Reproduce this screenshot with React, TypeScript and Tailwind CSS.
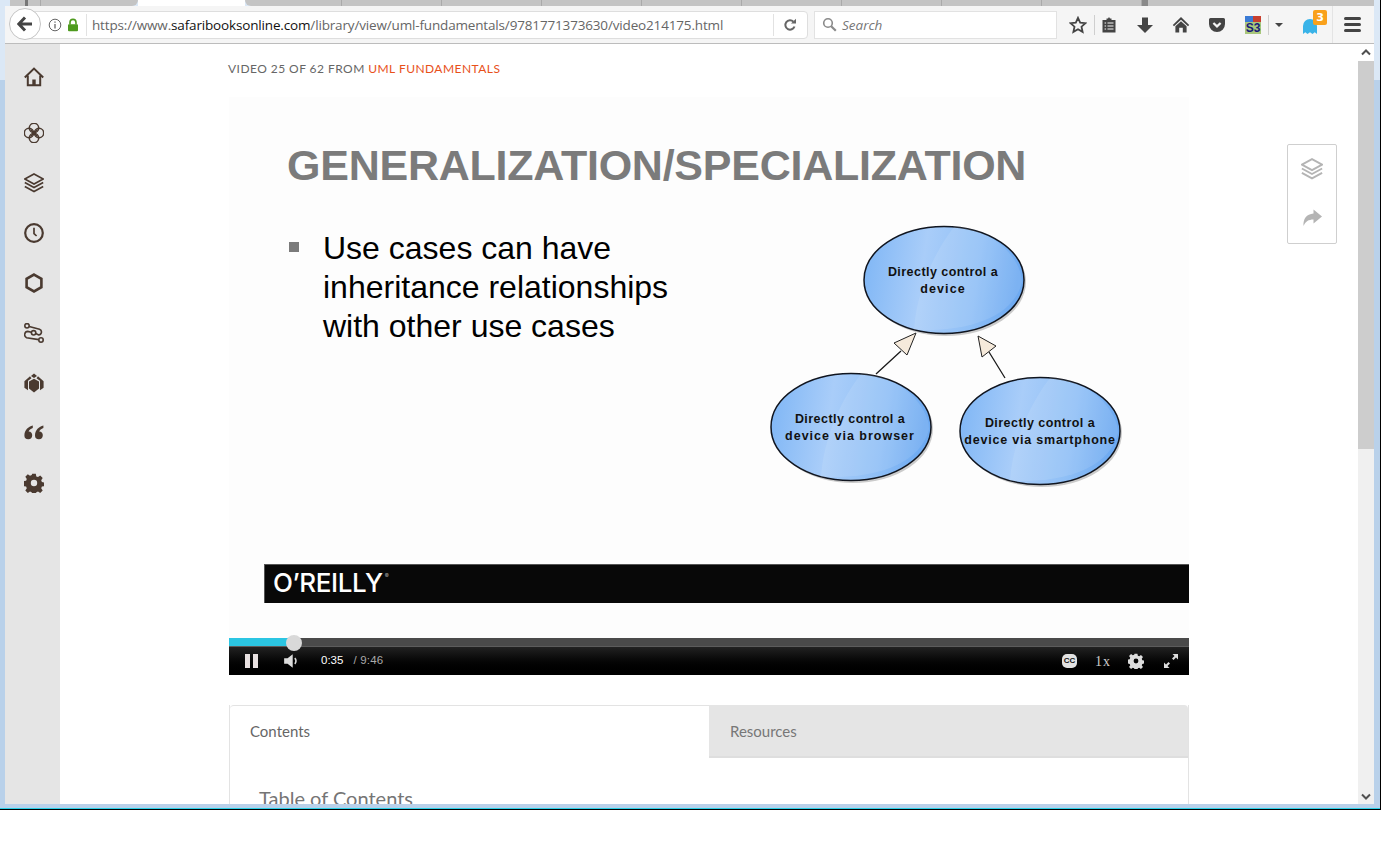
import React from 'react';

const brown = '#4a3a30';

const SIDE_ICONS: React.ReactNode[] = [
  <g fill="none" stroke={brown} strokeWidth="2" key="home">
    <path d="M.8 10.500 10 1.600l9.200 8.900" />
    <path d="M3.800 8.500V18.200h12.400V8.500" />
    <path d="M10 18v-5.500" strokeWidth="3.400" />
  </g>,
  <g fill="none" stroke={brown} strokeWidth="1.500" key="petals">
    <circle cx="10" cy="5" r="4.700" />
    <circle cx="10" cy="15" r="4.700" />
    <circle cx="5" cy="10" r="4.700" />
    <circle cx="15" cy="10" r="4.700" />
    <path d="M6.500 6.500l7 7M13.500 6.500l-7 7" />
  </g>,
  <g fill="none" stroke={brown} strokeWidth="1.600" key="layers">
    <path d="M10 1 19.200 6 10 11 .8 6z" />
    <path d="M.8 9.500 10 14.500l9.200-5" />
    <path d="M.8 13.500 10 18.500l9.200-5" />
  </g>,
  <g fill="none" stroke={brown} key="clock">
    <circle cx="10" cy="10" r="8.800" strokeWidth="2.200" />
    <path d="M10 4.800V10.600l2.600 2.400" strokeWidth="1.700" />
  </g>,
  <path d="M10 1.600 17.400 5.800v8.400L10 18.400 2.600 14.200V5.800z" fill="none" stroke={brown} strokeWidth="2.600" key="hex" />,
  <g fill="none" stroke={brown} strokeWidth="1.600" key="paths">
    <circle cx="3" cy="2.800" r="2.200" />
    <circle cx="9.600" cy="9.800" r="2.200" />
    <circle cx="17" cy="17" r="2.200" />
    <path d="M5.200 3.400 15.500 6.200a3 3 0 0 1 -.8 5.800L11.800 10.500M7.400 9.200 3.800 8.400a3.300 3.300 0 0 0 -1.200 6.300L14.800 16.600" />
  </g>,
  <g fill={brown} key="box">
    <path d="M10 .4 13 3 10 5 7 3z" />
    <path d="M10 5.800 15 8.600V15.600L10 19.400 5 15.600V8.600z" />
    <path d="M6 3.200 .4 8.200V14.800L4 17.200V7.700L7.500 5.300zM14 3.200 19.600 8.200V14.800L16 17.200V7.700L12.500 5.300z" />
  </g>,
  <g fill={brown} key="quote">
    <path d="M8.800 2.500C4.400 3.700 .4 7 .4 12.400a3.900 3.900 0 1 0 4.200-3.900c.5-1.500 2-2.800 4.200-3.600z" />
    <path d="M19.400 2.500c-4.400 1.200-8.400 4.500-8.400 9.900a3.900 3.900 0 1 0 4.200-3.900c.5-1.500 2-2.800 4.200-3.600z" />
  </g>,
  <path
    key="gear"
    fill={brown}
    fillRule="evenodd"
    d="M8.200.8h3.600l.5 2.600 1.700.7 2.200-1.500 2.500 2.500-1.500 2.200.7 1.700 2.600.5v3.600l-2.600.5-.7 1.700 1.500 2.200-2.500 2.500-2.200-1.500-1.700.7-.5 2.600H8.200l-.5-2.600-1.700-.7-2.200 1.500-2.500-2.500 1.500-2.200-.7-1.700-2.600-.5V8.200l2.600-.5.7-1.700-1.500-2.200 2.500-2.500 2.200 1.500 1.700-.7zM10 6.800a3.200 3.200 0 1 0 0 6.400 3.200 3.200 0 0 0 0-6.400z"
  />,
];

function Sidebar() {
  return (
    <div className="w-[55px] shrink-0 bg-[#e5e5e5] flex flex-col items-center gap-[30px] pt-[23px] pl-[3px]">
      {SIDE_ICONS.map((icon, i) => (
        <svg key={i} width="20" height="20" viewBox="0 0 20 20" className="first:mb-[6px]">
          {icon}
        </svg>
      ))}
    </div>
  );
}

function TabStrip() {
  return (
    <div className="h-[6px] shrink-0 flex">
      <div className="w-[10px]" />
      <div className="w-[15px] bg-[#c4c4c4]" />
      <div className="w-[3px] bg-[#777]" />
      <div className="w-[13px] bg-[#c4c4c4] border-r border-[#aaa]" />
      <div className="w-[97px] bg-[#c4c4c4] rounded-br-[8px]" />
      <div className="w-[107px] bg-white" />
      <div className="w-[97px] bg-[#c4c4c4] border-r border-[#aaa] rounded-bl-[8px]" />
      {[0, 1, 2, 3, 4, 5, 6, 7].map(i => (
        <div key={i} className="w-[100px] bg-[#c4c4c4] border-r border-[#aaa]" />
      ))}
      <div className="w-[6px] bg-[#8a8a8a]" />
      <div className="flex-1 bg-[#c4c4c4] mr-[6px]" />
    </div>
  );
}

function Toolbar() {
  return (
    <div className="h-[38px] shrink-0 bg-[#f5f5f5] border-b border-[#bcbcbc] flex items-center relative">
      {/* back button */}
      <div className="absolute left-[4px] top-[2px] w-[32px] h-[32px] rounded-full bg-white border border-[#c4c4c4] flex items-center justify-center z-10">
        <svg width="16" height="16" viewBox="0 0 16 16">
          <path d="M8 1.500 1.800 8 8 14.500M2.500 8H15" fill="none" stroke="#444" strokeWidth="3" />
        </svg>
      </div>
      <div className="ml-[20px] w-[783px] h-[28px] bg-white border border-[#dedede] rounded-r-sm flex items-center pl-[22px]">
        <svg width="14" height="14" viewBox="0 0 14 14" className="shrink-0">
          <circle cx="7" cy="7" r="5.800" fill="none" stroke="#666" strokeWidth="1" />
          <path d="M7 6v4.400M7 3.400v1.400" stroke="#666" strokeWidth="1.300" />
        </svg>
        <svg width="12" height="14" viewBox="0 0 12 14" className="ml-[5px] shrink-0">
          <path d="M3 6.500V4.400a3 3 0 0 1 6 0v2.100" fill="none" stroke="#4e9a1e" strokeWidth="1.600" />
          <rect x="1" y="6.200" width="10" height="7" rx="1" fill="#4e9a1e" />
        </svg>
        <div className="w-px h-[22px] bg-[#e2e2e2] ml-[7px]" />
        <div className="ml-[5px] mt-px text-[13.5px] text-[#666] font-['Open_Sans',sans-serif] whitespace-nowrap tracking-[-0.16px] w-[681px]">
          https://www.<span className="text-[#111]">safaribooksonline.com</span>/library/view/uml-fundamentals/9781771373630/video214175.html
        </div>
        <div className="w-px h-[22px] bg-[#e2e2e2]" />
        <svg width="14" height="14" viewBox="0 0 14 14" className="ml-[9px]">
          <path d="M11.500 8.500A4.700 4.700 0 1 1 10.400 3.600" fill="none" stroke="#666" strokeWidth="2" />
          <path d="M8 5.600h5V.8z" fill="#666" />
        </svg>
      </div>
      <div className="ml-[6px] w-[243px] h-[28px] bg-white border border-[#e2e2e2] flex items-center pl-[7px] gap-[5px]">
        <svg width="15" height="15" viewBox="0 0 15 15">
          <circle cx="6" cy="6" r="4.300" fill="none" stroke="#8a8a8a" strokeWidth="1.600" />
          <path d="M9.200 9.200l4.600 4.600" stroke="#8a8a8a" strokeWidth="2.200" />
        </svg>
        <span className="mt-px text-[13.5px] italic text-[#777] font-['Open_Sans',sans-serif]">Search</span>
      </div>
      <div className="flex items-center ml-[12px]">
        <svg width="18" height="18" viewBox="0 0 18 18">
          <path d="M9 1.800l2.200 4.800 5.200.6-3.900 3.500 1.100 5.200L9 13.200l-4.600 2.700 1.100-5.200L1.600 7.200l5.200-.6z" fill="none" stroke="#444" strokeWidth="1.800" />
        </svg>
        <div className="w-px h-[20px] bg-[#cfcfcf] ml-[7px]" />
        <svg width="16" height="18" viewBox="0 0 16 18" className="ml-[6px]">
          <path d="M1.500 4h13v12.500h-13zM5.500 4V2.500h1.500L8 1l1 1.500h1.500V4" fill="#444" />
          <path d="M3.600 7h1.500M6.500 7h6M3.600 10h1.500M6.500 10h6M3.600 13h1.500M6.500 13h6" stroke="#f5f5f5" strokeWidth="1.200" />
        </svg>
        <svg width="18" height="18" viewBox="0 0 18 18" className="ml-[19px]">
          <path d="M6 1.500h6v7.500h5L9 17 1 9h5z" fill="#444" />
        </svg>
        <svg width="18" height="18" viewBox="0 0 18 18" className="ml-[18px]">
          <path d="M9 1 .8 9l1.200 1.200L9 3.700l7 6.500L17.200 9z" fill="#444" />
          <path d="M9 5.200 3.400 10.200V16.600h3.800v-4.800h3.600v4.800h3.800V10.200z" fill="#444" />
        </svg>
        <svg width="18" height="18" viewBox="0 0 18 18" className="ml-[18px]">
          <path d="M2.500 2h13A1.500 1.500 0 0 1 17 3.500V8A8 8 0 0 1 1 8V3.500A1.500 1.500 0 0 1 2.500 2z" fill="#444" />
          <path d="M5.400 7 9 10.400 12.600 7" fill="none" stroke="#f5f5f5" strokeWidth="2.200" />
        </svg>
        <div className="ml-[19px] w-[16px] h-[18px] grid grid-cols-2 grid-rows-[6px_12px] overflow-hidden">
          <div className="bg-[#3a7bd5]" />
          <div className="bg-[#c8402f]" />
          <div className="col-span-2 bg-[#a9c77c] text-[#1a1a7a] text-[12px] leading-[12px] font-bold font-['Liberation_Sans',sans-serif] text-center">S3</div>
        </div>
        <div className="w-px h-[20px] bg-[#cfcfcf] ml-[7px]" />
        <div className="ml-[6px] w-0 h-0 border-x-[4px] border-x-transparent border-t-[4px] border-t-[#444]" />
        <div className="relative ml-[19px] w-[16px] h-[18px]">
          <svg width="16" height="18" viewBox="0 0 16 18" className="mt-[2px]">
            <path d="M1 16V8a7 7 0 0 1 14 0v8l-2.300-1.800L10.500 16 8 14.200 5.500 16l-2.200-1.800z" fill="#39b3e8" />
          </svg>
          <div className="absolute left-[11px] -top-[6px] w-[14px] h-[15px] rounded-[2px] bg-[#f9a11b] text-white text-[11px] leading-[15px] font-bold text-center font-['DejaVu_Sans',sans-serif]">3</div>
        </div>
        <div className="w-px h-[37px] bg-[#e4e4e4] ml-[14px]" />
        <div className="ml-[11px] w-[17px] flex flex-col gap-[3px]">
          <div className="h-[3px] rounded-sm bg-[#444]" />
          <div className="h-[3px] rounded-sm bg-[#444]" />
          <div className="h-[3px] rounded-sm bg-[#444]" />
        </div>
      </div>
    </div>
  );
}

function Ellipse({ cx, cy, id, lines, spacing, dx = 0 }: { cx: number; cy: number; id: string; lines: string[]; spacing: number[]; dx?: number }) {
  return (
    <g>
      <ellipse cx={cx + 2} cy={cy + 2} rx={80} ry={54} fill="#aaa" opacity="0.6" />
      <ellipse cx={cx} cy={cy} rx={80} ry={53.5} fill={`url(#${id})`} stroke="#10151f" strokeWidth="1.500" />
      <path
        d={`M${cx - 30} ${cy + 50} C${cx - 28} ${cy + 15} ${cx - 12} ${cy - 25} ${cx + 10} ${cy - 53} C${cx + 50} ${cy - 52} ${cx + 78} ${cy - 20} ${cx + 78} ${cy + 2} C${cx + 70} ${cy + 35} ${cx + 30} ${cy + 52} ${cx - 30} ${cy + 50}z`}
        fill="#ffffff"
        opacity="0.1"
      />
      {lines.map((l, i) => (
        <text
          key={i}
          x={cx + dx}
          y={cy - 4.500 + i * 17}
          textAnchor="middle"
          fontSize="12.500"
          fontWeight="700"
          fill="#111"
          letterSpacing={spacing[i]}
          fontFamily="'Liberation Sans', sans-serif"
        >
          {l}
        </text>
      ))}
    </g>
  );
}

function Diagram() {
  return (
    <svg width="370" height="280" viewBox="0 0 370 280" className="shrink-0">
      <defs>
        {['ga', 'gb', 'gc'].map(id => (
          <linearGradient key={id} id={id} x1="0" x2="1" y1="0" y2="0.1">
            <stop offset="0" stopColor="#7db5f5" />
            <stop offset="0.4" stopColor="#a9cdf9" />
            <stop offset="0.75" stopColor="#8fbff6" />
            <stop offset="1" stopColor="#6eaaf1" />
          </linearGradient>
        ))}
      </defs>
      <Ellipse cx={184} cy={60} id="ga" lines={['Directly control a', 'device']} spacing={[0.45, 1.1]} dx={-1} />
      <Ellipse cx={91} cy={207} id="gb" lines={['Directly control a', 'device via browser']} spacing={[0.45, 1]} dx={-1} />
      <Ellipse cx={280} cy={211} id="gc" lines={['Directly control a', 'device via smartphone']} spacing={[0.45, 0.8]} dx={0} />
      <path d="M116 154 141 131M245 158 229 132" stroke="#1a1a1a" strokeWidth="1.300" />
      <path d="M156 113 134 123 147 135z" fill="#f6eadb" stroke="#222" strokeWidth="1" />
      <path d="M218 116 236 126 222 137z" fill="#f6eadb" stroke="#222" strokeWidth="1" />
    </svg>
  );
}

function Player() {
  return (
    <div className="w-[960px] h-[578px] bg-[#fdfdfd] flex flex-col">
      <div className="h-[541px] flex flex-col">
        <div className="pl-[58px] pt-[40px] text-[43px] leading-[56px] font-bold tracking-[-0.24px] text-[#7b7b7b] font-['Liberation_Sans',sans-serif] whitespace-nowrap">
          GENERALIZATION/SPECIALIZATION
        </div>
        <div className="flex h-[351px] mt-[27px]">
          <div className="pl-[60px] pt-[5px] flex gap-[24px] w-[531px] shrink-0 h-fit">
            <div className="w-[10px] h-[10px] bg-[#7b7b7b] mt-[17px] shrink-0" />
            <div className="text-[32px] leading-[39px] text-black font-['Liberation_Sans',sans-serif] whitespace-nowrap pt-[4px]">
              Use cases can have
              <br />
              inheritance relationships
              <br />
              with other use cases
            </div>
          </div>
          <Diagram />
        </div>
        <div className="ml-[35px] mt-[-7px] h-[39px] bg-[#080808] border-t border-l border-[#555] flex items-center pl-[8px] pb-[3px] text-white text-[26px] font-['Inter',sans-serif] font-medium tracking-[-0.4px]">
          <span>O’REILLY</span>
          <span className="text-[6px] ml-[2px] mb-[14px] text-[#aaa]">®</span>
        </div>
      </div>
      <div className="h-[37px] flex flex-col relative">
        <div className="h-[9px] bg-[#4a4a4a] border-b border-[#5c5c5c]">
          <div className="h-full bg-[#2bc5e2] w-[65px]" />
        </div>
        <div className="absolute left-[57px] -top-[3px] w-[16px] h-[16px] rounded-full bg-[#d9d9d9]" />
        <div className="flex-1 bg-gradient-to-b from-[#222] to-black flex items-center pl-[16px] pr-[10px] text-[#e0e0e0]">
          <div className="flex gap-[3px]">
            <div className="w-[5px] h-[14px] bg-[#e8e0e0]" />
            <div className="w-[5px] h-[14px] bg-[#e8e0e0]" />
          </div>
          <svg width="16" height="16" viewBox="0 0 14 14" className="ml-[25px]">
            <path d="M1 4.500h3L8.500 1v12L4 9.500H1z" fill="#ddd" />
            <path d="M10.300 4.500a3.500 3.500 0 0 1 0 5" fill="none" stroke="#ddd" strokeWidth="1.400" />
          </svg>
          <span className="ml-[22px] text-[11.5px] text-white font-['Liberation_Sans',sans-serif]">0:35</span>
          <span className="ml-[10px] text-[11.5px] text-[#aaa] font-['Liberation_Sans',sans-serif] tracking-[0.2px]">/ 9:46</span>
          <div className="ml-auto flex items-center">
            <div className="w-[15px] h-[14px] rounded-[5px] bg-[#e2e2e2] text-[#111] text-[8px] leading-[14px] font-bold text-center font-['Liberation_Sans',sans-serif]">CC</div>
            <span className="ml-[18px] text-[14px] text-[#ccc] font-['Liberation_Serif',serif] tracking-[1px]">1x</span>
            <svg width="16" height="16" viewBox="0 0 20 20" className="ml-[17px]">
              <path
                fill="#ddd"
                fillRule="evenodd"
                d="M8.200.8h3.600l.5 2.600 1.700.7 2.200-1.500 2.500 2.500-1.500 2.200.7 1.700 2.600.5v3.600l-2.600.5-.7 1.700 1.500 2.200-2.500 2.500-2.200-1.500-1.700.7-.5 2.600H8.200l-.5-2.600-1.700-.7-2.200 1.500-2.500-2.500 1.500-2.200-.7-1.700-2.600-.5V8.200l2.600-.5.7-1.700-1.500-2.200 2.500-2.500 2.200 1.500 1.700-.7zM10 7a3 3 0 1 0 0 6 3 3 0 0 0 0-6z"
              />
            </svg>
            <svg width="16" height="16" viewBox="0 0 16 16" className="ml-[19px]">
              <path d="M9.500 1H15v5.500l-2-2-2.500 2.500-1.500-1.500L11.500 3zM1 9.500V15h5.500l-2-2L7 10.500 5.500 9 3 11.500z" fill="#ddd" />
            </svg>
          </div>
        </div>
      </div>
    </div>
  );
}

function Tabs() {
  return (
    <div className="w-[960px] mt-[30px] border-x border-[#e3e3e3] font-['Lato',sans-serif]">
      <div className="flex h-[53px]">
        <div className="w-[479px] border-t border-[#e3e3e3] rounded-tl-sm pl-[20px] pt-[14px] text-[15px] text-[#666]">Contents</div>
        <div className="flex-1 bg-[#e5e5e5] border-b-2 border-[#dedede] rounded-tr-sm pl-[21px] pt-[15px] text-[15px] text-[#777]">Resources</div>
      </div>
      <div className="pl-[29px] pt-[27px] text-[20px] leading-[26px] text-[#757575]">Table of Contents</div>
    </div>
  );
}

function Scrollbar() {
  return (
    <div className="w-[16px] shrink-0 bg-[#f0f0f0] flex flex-col items-center">
      <div className="h-[17px] w-full bg-white flex items-center justify-center">
        <svg width="10" height="7" viewBox="0 0 10 7">
          <path d="M1 5.500 5 1.500l4 4" fill="none" stroke="#505050" strokeWidth="2" />
        </svg>
      </div>
      <div className="h-[388px] w-full bg-[#cdcdcd]" />
      <div className="flex-1" />
      <div className="h-[16px] flex items-center justify-center">
        <svg width="10" height="7" viewBox="0 0 10 7">
          <path d="M1 1.500 5 5.500l4-4" fill="none" stroke="#505050" strokeWidth="2" />
        </svg>
      </div>
    </div>
  );
}

export default function App() {
  return (
    <div className="w-[1381px] h-[851px] bg-white overflow-hidden">
      <div className="w-[1381px] h-[810px] bg-[linear-gradient(#dbe8f6_80px,#b9d1ea_80px)] border-r border-b border-black flex flex-col">
        <TabStrip />
        <div className="flex-1 flex flex-col min-h-0 ml-[5px] mr-[6px]">
          <Toolbar />
          <div className="flex-1 flex min-h-0">
            <Sidebar />
            <div className="flex-1 bg-white relative overflow-hidden pl-[169px]">
              <div className="pt-[18px] h-[53px] text-[12px] leading-[14px] tracking-[0.45px] text-[#666] font-['Lato',sans-serif] -ml-px">
                VIDEO 25 OF 62 FROM <span className="text-[#e8501a]">UML FUNDAMENTALS</span>
              </div>
              <Player />
              <Tabs />
              <div className="absolute left-[1227px] top-[100px] w-[50px] h-[100px] border border-[#cfcfcf] rounded-[2px] bg-white flex flex-col items-center gap-[28px] pt-[13px]">
                <svg width="22" height="22" viewBox="0 0 20 20">
                  <g fill="none" stroke="#b4b4b4" strokeWidth="1.700">
                    <path d="M10 1 19.200 6 10 11 .8 6z" />
                    <path d="M.8 9.500 10 14.500l9.200-5" />
                    <path d="M.8 13.500 10 18.500l9.200-5" />
                  </g>
                </svg>
                <svg width="22" height="20" viewBox="0 0 22 20">
                  <path d="M12.500 1.500 21 8.500l-8.500 7v-4c-5 0-8 2-10 6.500-.5-7 3-12 10-12.500z" fill="#b4b4b4" />
                </svg>
              </div>
            </div>
            <Scrollbar />
          </div>
        </div>
        <div className="h-[4px] shrink-0" />
        <div className="h-px shrink-0 bg-[#2bd0e8]" />
      </div>
    </div>
  );
}
